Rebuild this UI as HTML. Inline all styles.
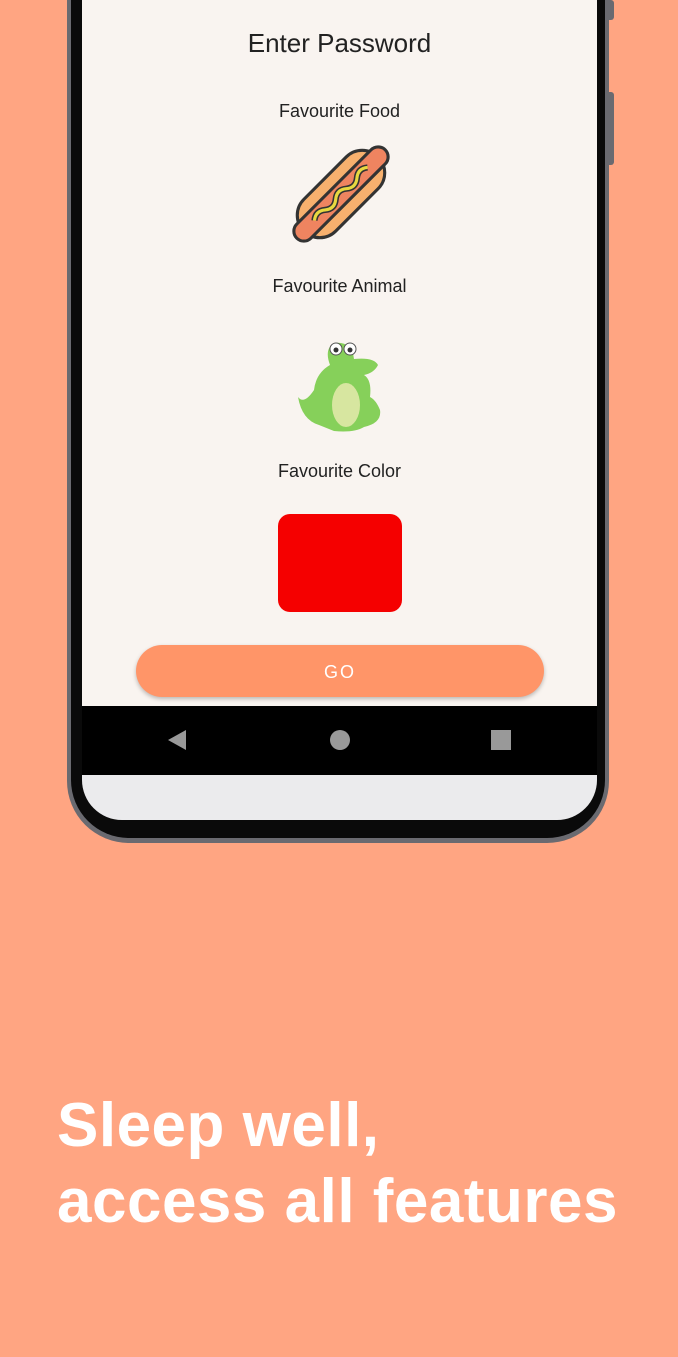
<!DOCTYPE html>
<html><head><style>
body{margin:0;width:678px;height:1357px;background:#ffa582;position:relative;overflow:hidden;font-family:"Liberation Sans",sans-serif}
.frame{position:absolute;left:67px;top:-60px;width:542px;height:903px;border-radius:0 0 62px 62px;background:#6a6a70;}
.bezel{position:absolute;left:71px;top:-60px;width:534px;height:898px;border-radius:0 0 58px 58px;background:#0a0a0a;}
.btn{position:absolute;left:608px;width:6px;background:#6a6a70;border-radius:0 3px 3px 0}
.screen{position:absolute;left:82px;top:0;width:515px;height:706px;background:#f9f4f0;text-align:center;color:#222}
.nav{position:absolute;left:82px;top:706px;width:515px;height:69px;background:#000}
.chin{position:absolute;left:82px;top:775px;width:515px;height:45px;background:#ebebed;border-radius:0 0 40px 40px}
h1{position:absolute;top:28px;left:0;width:100%;margin:0;font-size:26px;font-weight:normal}
.lbl{position:absolute;left:0;width:100%;font-size:18px}
.go{position:absolute;left:54px;top:645px;width:408px;height:52px;border-radius:26px;background:#ff9568;color:#fff;font-size:18px;letter-spacing:2px;line-height:54px;box-shadow:0 2px 4px rgba(0,0,0,.25)}
.big{position:absolute;left:57px;color:#fff;font-size:62px;font-weight:bold;letter-spacing:0.5px}
</style></head><body>
<div class="frame"></div><div class="bezel"></div>
<div class="btn" style="top:0;height:20px"></div>
<div class="btn" style="top:92px;height:73px"></div>
<div class="screen">
<h1>Enter Password</h1>
<div class="lbl" style="top:101px">Favourite Food</div>
<svg style="position:absolute;left:204px;top:138px" width="110" height="112" viewBox="0 0 110 112">
<g transform="translate(55 56) scale(1.25) rotate(-45) translate(-52 -54)">
<rect x="10" y="36" width="84" height="36" rx="18" fill="#f7b06e" stroke="#333" stroke-width="2.5"/>
<rect x="2" y="46" width="100" height="16" rx="8" fill="#ef8460" stroke="#333" stroke-width="2.5"/>
<path d="M22 54 q6 -5 12 0 t12 0 t12 0 t12 0 t12 0" fill="none" stroke="#333" stroke-width="5"/>
<path d="M22 54 q6 -5 12 0 t12 0 t12 0 t12 0 t12 0" fill="none" stroke="#e8d840" stroke-width="2.5"/>
</g></svg>
<div class="lbl" style="top:276px">Favourite Animal</div>
<svg style="position:absolute;left:212px;top:335px" width="92" height="100" viewBox="0 0 92 100">
<path d="M20 55 Q10 70 4 62 Q8 85 25 90 L40 96 Q60 98 70 92 Q88 88 86 75 Q82 65 76 62 Q78 45 70 40 Q80 38 84 30 Q80 22 60 24 Q58 6 40 8 Q30 14 36 30 Q22 38 20 55Z" fill="#86d05a"/>
<ellipse cx="52" cy="70" rx="14" ry="22" fill="#d7e6a0"/>
<circle cx="42" cy="14" r="6" fill="#fff" stroke="#555"/><circle cx="56" cy="14" r="6" fill="#fff" stroke="#555"/>
<circle cx="42" cy="15" r="2.5" fill="#333"/><circle cx="56" cy="15" r="2.5" fill="#333"/>
</svg>
<div class="lbl" style="top:461px">Favourite Color</div>
<div style="position:absolute;left:196px;top:514px;width:124px;height:98px;border-radius:12px;background:#f50000"></div>
<div class="go">GO</div>
</div>
<div class="nav">
<svg width="515" height="69"><polygon points="86,34 104,24 104,44" fill="#999"/><circle cx="258" cy="34" r="10" fill="#999"/><rect x="409" y="24" width="20" height="20" fill="#999"/></svg>
</div>
<div class="chin"></div>
<div class="big" style="top:1090px">Sleep well,</div>
<div class="big" style="top:1166px">access all features</div>
</body></html>
